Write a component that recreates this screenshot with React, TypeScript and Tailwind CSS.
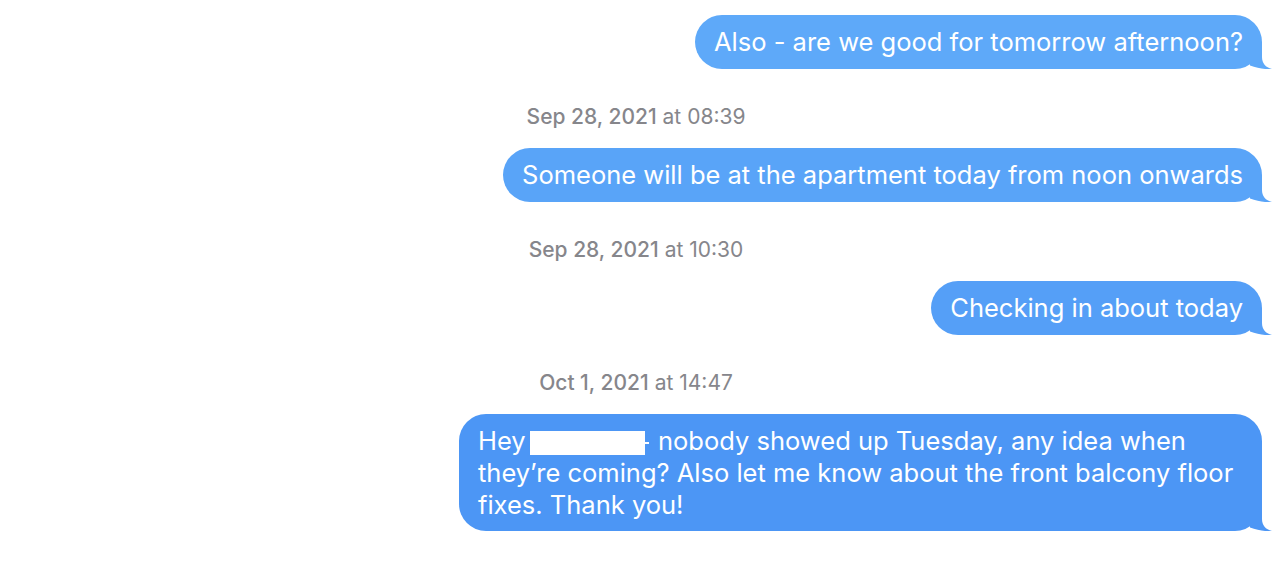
import React from "react";

const font = { fontFamily: "Inter, 'Noto Sans', sans-serif" };

function Tail({ color }: { color: string }) {
  return (
    <svg
      className="absolute bottom-0 right-[-10px]"
      width="22"
      height="27"
      viewBox="0 0 22 27"
    >
      <path
        d="M0 0 H12 V15 C12 21 15.5 25.5 22 27 C16 27.6 8 26.5 0 23.5 Z"
        fill={color}
      />
    </svg>
  );
}

function Bubble({
  color,
  className = "",
  children,
}: {
  color: string;
  className?: string;
  children: React.ReactNode;
}) {
  return (
    <div
      className={`relative mr-[10px] rounded-[27px] px-[19px] py-[11px] text-[25.5px] leading-[32px] text-white ${className}`}
      style={{ backgroundColor: color }}
    >
      {children}
      <Tail color={color} />
    </div>
  );
}

function Stamp({ date, time }: { date: string; time: string }) {
  return (
    <div className="w-full pt-[36px] pb-[19px] text-center text-[21px] leading-[24px] text-[#86868b]">
      <span className="font-medium">{date}</span> at {time}
    </div>
  );
}

export default function App() {
  return (
    <div className="min-h-[566px] w-[1272px] bg-white" style={font}>
      <div className="flex flex-col items-end pt-[15px]">
        <Bubble color="#5ea9f9">Also - are we good for tomorrow afternoon?</Bubble>
        <Stamp date="Sep 28, 2021" time="08:39" />
        <Bubble color="#59a4f8">Someone will be at the apartment today from noon onwards</Bubble>
        <Stamp date="Sep 28, 2021" time="10:30" />
        <Bubble color="#559ff7">Checking in about today</Bubble>
        <Stamp date="Oct 1, 2021" time="14:47" />
        <Bubble color="#4c96f5" className="w-[803px] !py-[10.5px]">
          Hey{" "}
          <span className="ml-[-3px] inline-block h-[24px] w-[115px] bg-white align-[-5px]" />
          <span className="inline-block h-[2px] w-[4px] bg-white align-middle" />
          <span className="ml-[2px]"> nobody showed up Tuesday, any idea when</span>
          <br />
          they’re coming? Also let me know about the front balcony floor
          <br />
          fixes. Thank you!
        </Bubble>
      </div>
    </div>
  );
}
